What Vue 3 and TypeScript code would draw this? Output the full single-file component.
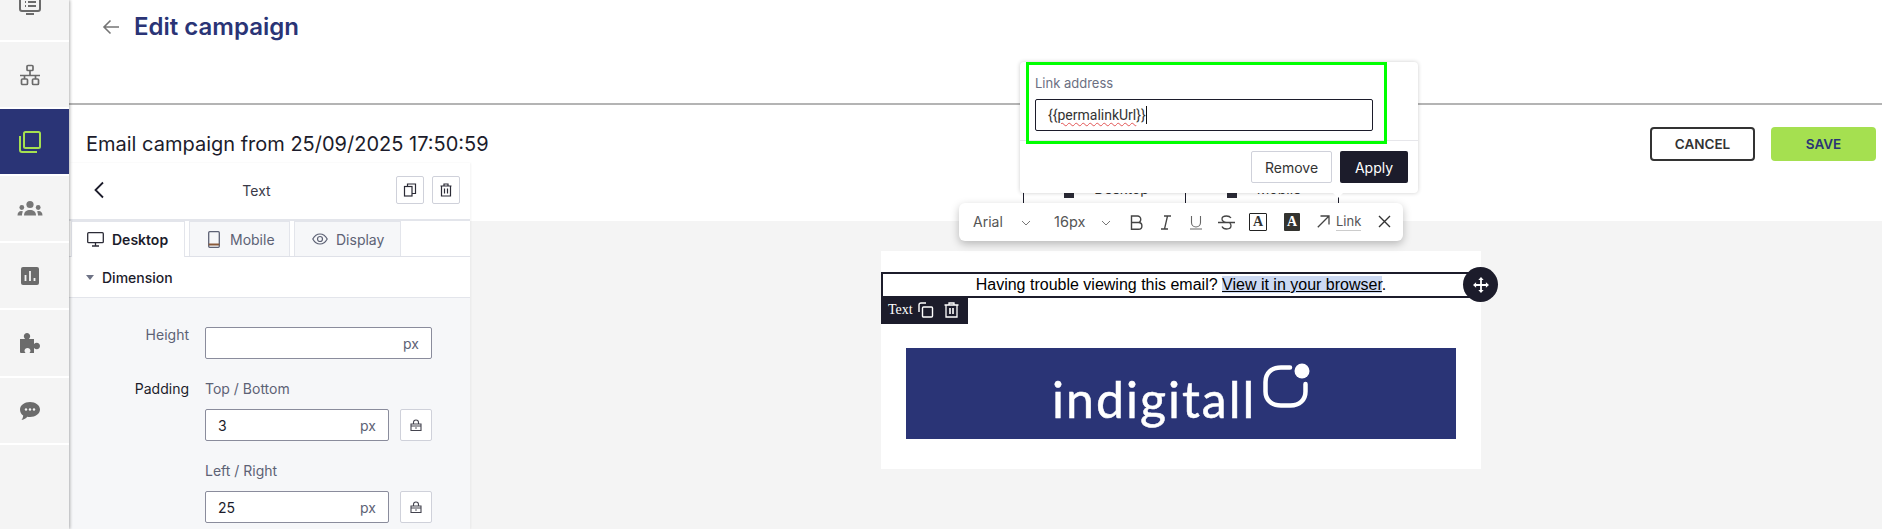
<script setup lang="ts">
const navItems = [
  { id: 'list', height: 40 },
  { id: 'flow', height: 65 },
  { id: 'templates', height: 65 },
  { id: 'users', height: 65 },
  { id: 'stats', height: 65 },
  { id: 'addons', height: 66 },
  { id: 'chat', height: 65 },
]
const braceOpen = '{' + '{'
const braceClose = '}' + '}'
</script>

<template>
  <div class="page">
    <aside class="sidebar">
      <div
        v-for="item in navItems"
        :key="item.id"
        class="nav-item"
        :class="{ active: item.id === 'templates', first: item.id === 'list' }"
        :style="{ height: item.height + 'px' }"
      >
        <svg v-if="item.id === 'list'" width="24" height="24" viewBox="0 0 24 24" fill="none" stroke="#6b6b6b" stroke-width="2">
          <rect x="2" y="1" width="20" height="18" rx="2" />
          <path d="M7 6h1M7 10h1M7 14h1M10 6h8M10 10h8M10 14h8M8 22h8" />
        </svg>
        <svg v-else-if="item.id === 'flow'" width="22" height="22" viewBox="0 0 22 22" fill="none" stroke="#6b6b6b" stroke-width="1.7">
          <rect x="8" y="1.5" width="6" height="5" rx="1" />
          <rect x="2.5" y="15" width="6" height="5.5" rx="1" />
          <rect x="13.5" y="15" width="6" height="5.5" rx="1" />
          <path d="M11 6.5v5M1 11.5h20M5.5 11.5V15M16.5 11.5V15" />
        </svg>
        <svg v-else-if="item.id === 'templates'" width="24" height="24" viewBox="0 0 24 24" fill="none" stroke="#a5e050" stroke-width="2">
          <rect x="6" y="2" width="16" height="16" rx="1.5" />
          <path d="M2 6v14a2 2 0 0 0 2 2h15" />
        </svg>
        <svg v-else-if="item.id === 'users'" width="26" height="18" viewBox="0 0 26 18" fill="#777">
          <circle cx="13" cy="4.5" r="3.6" />
          <path d="M7 15.5c0-4 2.6-5.6 6-5.6s6 1.6 6 5.6z" />
          <circle cx="4.8" cy="7.5" r="2.4" />
          <circle cx="21.2" cy="7.5" r="2.4" />
          <path d="M.5 15.5c0-3 1.5-4.5 3.8-4.5.8 0 1.3.2 1.7.5-.7 1-1 2.4-1 4zM25.5 15.5c0-3-1.5-4.5-3.8-4.5-.8 0-1.3.2-1.7.5.7 1 1 2.4 1 4z" />
        </svg>
        <svg v-else-if="item.id === 'stats'" width="18" height="18" viewBox="0 0 18 18">
          <rect width="18" height="18" rx="2" fill="#6b6b6b" />
          <path d="M4.5 8v6M9 4v10M13.5 11v3" stroke="#f4f4f4" stroke-width="1.8" />
        </svg>
        <svg v-else-if="item.id === 'addons'" width="22" height="22" viewBox="0 0 22 22" fill="#6b6b6b">
          <path d="M1 7h5c-.8-1-1.2-1.8-1.2-2.7C4.8 2.3 6.3 1 8 1s3.2 1.3 3.2 3.3c0 .9-.4 1.700-1.200 2.700h5v5c1-.8 1.800-1.200 2.700-1.200 2 0 3.300 1.500 3.300 3.200s-1.300 3.200-3.300 3.200c-.9 0-1.700-.4-2.700-1.200V21h-4.500c.7-.9 1-1.600 1-2.300 0-1.500-1.300-2.700-3-2.700s-3 1.200-3 2.700c0 .7.3 1.400 1 2.300H2a1 1 0 0 1-1-1z" />
        </svg>
        <svg v-else width="20" height="18" viewBox="0 0 20 18">
          <path d="M10 0c5.500 0 10 3.200 10 7.500S15.500 15 10 15c-1 0-1.900-.1-2.800-.3C6 16.300 4.200 17.600 1.500 18c1-1.100 1.600-2.500 1.700-4.400C1.200 12.200 0 10 0 7.500 0 3.200 4.500 0 10 0z" fill="#6b6b6b" />
          <circle cx="6" cy="7.5" r="1.2" fill="#f4f4f4" />
          <circle cx="10" cy="7.5" r="1.2" fill="#f4f4f4" />
          <circle cx="14" cy="7.5" r="1.2" fill="#f4f4f4" />
        </svg>
      </div>
    </aside>

    <main class="main">
      <header class="top-header">
        <svg class="back-arrow" width="18" height="16" viewBox="0 0 18 16" fill="none" stroke="#757575" stroke-width="1.6">
          <path d="M17 8H2M8.5 1.5 2 8l6.500 6.500" />
        </svg>
        <h1>Edit campaign</h1>
      </header>

      <div class="title-row">
        <h2>Email campaign from 25/09/2025 17:50:59</h2>
        <div class="title-actions">
          <button class="btn-cancel">CANCEL</button>
          <button class="btn-save">SAVE</button>
        </div>
      </div>

      <div class="workspace">
        <section class="panel">
          <div class="panel-head">
            <svg class="panel-back" width="12" height="18" viewBox="0 0 12 18" fill="none" stroke="#1c1c2b" stroke-width="1.8">
              <path d="M10 1.5 2.5 9l7.500 7.500" />
            </svg>
            <span class="panel-title">Text</span>
            <button class="icon-btn">
              <svg width="14" height="14" viewBox="0 0 14 14" fill="none" stroke="#2b2b36" stroke-width="1.2">
                <rect x="1.5" y="3.5" width="7.5" height="9.5" />
                <path d="M4.5 3.5V1h8v9.500H9" />
              </svg>
            </button>
            <button class="icon-btn">
              <svg width="14" height="14" viewBox="0 0 14 14" fill="none" stroke="#2b2b36" stroke-width="1.2">
                <path d="M1.5 3h11M5 3V1h4v2M2.500 3v10h9V3M5.500 5.500v5M8.500 5.500v5" />
              </svg>
            </button>
          </div>

          <div class="tabs">
            <div class="tab selected">
              <svg width="17" height="15" viewBox="0 0 17 15" fill="none" stroke="#2b2b36" stroke-width="1.3">
                <rect x=".7" y=".7" width="15.6" height="10" rx="1" />
                <path d="M8.5 10.7v3M5 14h7" />
              </svg>
              Desktop
            </div>
            <div class="tab mobile">
              <svg width="12" height="17" viewBox="0 0 12 17" fill="none" stroke="#5d6275" stroke-width="1.3">
                <rect x=".7" y=".7" width="10.6" height="15.6" rx="1" />
                <path d="M.7 13.5h10.6" stroke-width="2" stroke="#8a5a3a" />
              </svg>
              Mobile
            </div>
            <div class="tab display">
              <svg width="16" height="12" viewBox="0 0 16 12" fill="none" stroke="#5d6275" stroke-width="1.2">
                <path d="M.8 6C2.5 2.8 5 1 8 1s5.500 1.800 7.200 5c-1.700 3.200-4.200 5-7.200 5S2.500 9.200.8 6z" />
                <circle cx="8" cy="6" r="2.5" />
              </svg>
              Display
            </div>
          </div>

          <div class="section-head">
            <span class="caret"></span>
            Dimension
          </div>

          <div class="form">
            <div class="form-row height-row">
              <label class="row-label">Height</label>
              <div class="field wide"><span class="unit">px</span></div>
            </div>
            <div class="form-row">
              <label class="row-label dark">Padding</label>
              <div class="padding-col">
                <span class="sub-label">Top / Bottom</span>
                <div class="field-line">
                  <div class="field"><span class="value">3</span><span class="unit">px</span></div>
                  <button class="lock-btn">
                    <svg width="12" height="12" viewBox="0 0 12 12" fill="none" stroke="#44444f" stroke-width="1.1">
                      <path d="M3.5 5V3.5a2.500 2.500 0 0 1 5 0V5" />
                      <path d="M1 5h10v6.500H1zM1 7h10" />
                      <circle cx="6" cy="9" r=".8" fill="#44444f" stroke="none" />
                    </svg>
                  </button>
                </div>
                <span class="sub-label second">Left / Right</span>
                <div class="field-line">
                  <div class="field"><span class="value">25</span><span class="unit">px</span></div>
                  <button class="lock-btn">
                    <svg width="12" height="12" viewBox="0 0 12 12" fill="none" stroke="#44444f" stroke-width="1.1">
                      <path d="M3.5 5V3.5a2.500 2.500 0 0 1 5 0V5" />
                      <path d="M1 5h10v6.500H1zM1 7h10" />
                      <circle cx="6" cy="9" r=".8" fill="#44444f" stroke="none" />
                    </svg>
                  </button>
                </div>
              </div>
            </div>
          </div>
        </section>

        <section class="canvas">
          <div class="email">
            <div class="text-block">
              <p>Having trouble viewing this email? <a>View it in your browser</a>.</p>
              <div class="block-tag">
                <span>Text</span>
                <svg width="16" height="16" viewBox="0 0 16 16" fill="none" stroke="#fff" stroke-width="1.4">
                  <path d="M1 10V3a2 2 0 0 1 2-2h5" />
                  <rect x="4.5" y="5" width="10" height="10" rx="1" />
                </svg>
                <svg width="15" height="16" viewBox="0 0 15 16" fill="none" stroke="#fff" stroke-width="1.3">
                  <path d="M.5 3h14M5 3V1h5v2M2 3v12h11V3" />
                  <path d="M6 6v6M9 6v6" stroke-width="1.6" />
                </svg>
              </div>
              <div class="move-handle">
                <svg width="16" height="16" viewBox="0 0 18 18" fill="#fff">
                  <path d="M9 0l3 3.500h-2V8h4.500V6L18 9l-3.500 3v-2H10v4.500h2L9 18l-3-3.500h2V10H3.500v2L0 9l3.500-3v2H8V3.500H6z" />
                </svg>
              </div>
            </div>
            <div class="logo-wrap">
              <div class="logo">
                <span class="logo-text">indigitall</span>
                <svg class="logo-mark" width="48" height="50" viewBox="0 0 48 50" fill="none">
                  <path d="M28 6.5H19C9.500 6.500 3.500 12 3.500 21v9.500c0 8.500 6 14 15.500 14h9.500c9 0 15-5.500 15-14V23" stroke="#fff" stroke-width="4.500" stroke-linecap="round" />
                  <circle cx="40" cy="10" r="7.5" fill="#fff" />
                </svg>
              </div>
            </div>
          </div>
        </section>
      </div>
    </main>

    <!-- device switch sits behind the popover, only its lower edge shows -->
    <div class="device-switch">
      <div class="device"><span class="device-dot"></span>Desktop</div>
      <div class="device"><span class="device-dot"></span>Mobile</div>
    </div>

    <div class="link-popover">
      <div class="popover-body">
        <label>Link address</label>
        <div class="link-input">
          <span>{{ braceOpen }}<u>permalinkUrl</u>{{ braceClose }}</span><i class="caret-line"></i>
        </div>
      </div>
      <div class="popover-foot">
        <button class="btn-remove">Remove</button>
        <button class="btn-apply">Apply</button>
      </div>
      <span class="popover-arrow"></span>
    </div>
    <div class="highlight-box"></div>

    <div class="toolbar">
      <span class="tb-select font">Arial</span>
      <svg class="chev" width="10" height="6" viewBox="0 0 10 6" fill="none" stroke="#777" stroke-width="1"><path d="M1 1l4 4 4-4" /></svg>
      <span class="tb-select size">16px</span>
      <svg class="chev size-chev" width="10" height="6" viewBox="0 0 10 6" fill="none" stroke="#777" stroke-width="1"><path d="M1 1l4 4 4-4" /></svg>
      <svg class="tb-icon bold" width="13" height="15" viewBox="0 0 13 15" fill="none" stroke="#444" stroke-width="1.4">
        <path d="M1.5 1h6a3 3 0 0 1 0 6.500h-6zM1.500 7.500h7a3.300 3.300 0 0 1 0 6.800h-7z" />
      </svg>
      <svg class="tb-icon ital" width="10" height="15" viewBox="0 0 10 15" fill="none" stroke="#444" stroke-width="1.3">
        <path d="M3 1h7M0 14h7M6.500 1l-3 13" />
      </svg>
      <svg class="tb-icon under" width="12" height="15" viewBox="0 0 12 15" fill="none" stroke="#666" stroke-width="1.1">
        <path d="M1.5 1v6.500a4.500 4.500 0 0 0 9 0V1M0 14h12" />
      </svg>
      <svg class="tb-icon strike" width="17" height="15" viewBox="0 0 17 15" fill="none" stroke="#444" stroke-width="1.3">
        <path d="M13 3C12 1.500 10.500 1 8.500 1 6 1 4 2.200 4 4c0 2 2 3 4.500 3.500M0 7.500h17M4 11.500C4.800 13.300 6.500 14 8.500 14c2.700 0 4.500-1.300 4.500-3.200 0-1-.4-1.900-1.200-2.500" />
      </svg>
      <span class="tb-a outline">A</span>
      <span class="tb-a solid">A</span>
      <svg class="tb-icon link-arrow" width="13" height="13" viewBox="0 0 13 13" fill="none" stroke="#444" stroke-width="1.3">
        <path d="M.8 12.200 12 1M3.500 1H12v8.500" />
      </svg>
      <span class="tb-link">Link</span>
      <svg class="tb-icon close" width="13" height="13" viewBox="0 0 13 13" fill="none" stroke="#333" stroke-width="1.4">
        <path d="M1 1l11 11M12 1 1 12" />
      </svg>
    </div>
  </div>
</template>

<style>
html,
body {
  margin: 0;
  background: #fff;
}
</style>

<style scoped>
.page {
  position: relative;
  display: flex;
  width: 1882px;
  height: 529px;
  overflow: hidden;
  font-family: Inter, "Liberation Sans", sans-serif;
  color: #1c1c2b;
  background: #fff;
}
button {
  font-family: inherit;
  cursor: pointer;
}

/* sidebar */
.sidebar {
  flex: none;
  width: 69px;
  display: flex;
  flex-direction: column;
  gap: 2px;
  background: #fff;
  box-shadow: 1px 0 3px rgba(0, 0, 0, 0.3);
  position: relative;
  z-index: 1;
}
.sidebar::after {
  content: "";
  display: block;
  flex: 1;
  background: #f4f4f4;
}
.nav-item {
  flex: none;
  display: flex;
  align-items: center;
  justify-content: center;
  padding-right: 9px;
  box-sizing: border-box;
  background: #f4f4f4;
  overflow: hidden;
}
.nav-item.first {
  align-items: flex-end;
  padding-bottom: 24px;
}
.nav-item.active {
  background: #2a3476;
}

.main {
  flex: 1;
  min-width: 0;
  display: flex;
  flex-direction: column;
}

/* header */
.top-header {
  flex: none;
  height: 93px;
  display: flex;
  align-items: flex-start;
  padding: 10px 0 0 33px;
  border-bottom: 2px solid #b4b4b4;
}
.back-arrow {
  margin-top: 9px;
}
.top-header h1 {
  margin: 0 0 0 14px;
  font-size: 24px;
  line-height: 34px;
  font-weight: 600;
  color: #2a3476;
}

.title-row {
  flex: none;
  height: 58px;
  display: flex;
  justify-content: space-between;
  padding: 22px 6px 0 17px;
  box-sizing: border-box;
}
.title-row h2 {
  margin: 0;
  font-size: 20px;
  line-height: 34px;
  font-weight: 400;
  color: #1c1c2b;
}
.title-actions {
  display: flex;
  gap: 16px;
}
.btn-cancel,
.btn-save {
  width: 105px;
  height: 34px;
  border-radius: 4px;
  font-size: 13.5px;
  font-weight: 600;
}
.btn-cancel {
  background: #fff;
  border: 2px solid #333;
  color: #333;
}
.btn-save {
  background: #a5e050;
  border: none;
  color: #2a3476;
}

.workspace {
  flex: 1;
  min-height: 0;
  display: flex;
}

/* settings panel */
.panel {
  flex: none;
  width: 401px;
  background: #fff;
  display: flex;
  flex-direction: column;
  box-shadow: 1px 0 2px rgba(0, 0, 0, 0.05);
  position: relative;
}
.panel-head {
  flex: none;
  height: 58px;
  display: flex;
  align-items: center;
  gap: 8px;
  padding: 0 10px 2px 24px;
  border-bottom: 2px solid #e3e5eb;
  box-sizing: border-box;
}
.panel-title {
  flex: 1;
  text-align: center;
  font-size: 14px;
  color: #3a3a48;
  padding-left: 12px;
}
.icon-btn {
  width: 28px;
  height: 28px;
  padding: 0;
  display: flex;
  align-items: center;
  justify-content: center;
  background: #fff;
  border: 1px solid #cfd1da;
  border-radius: 2px;
}
.tabs {
  flex: none;
  height: 36px;
  display: flex;
  gap: 4px;
  padding-left: 2px;
  border-bottom: 1px solid #dfe1e8;
  box-sizing: border-box;
}
.tab {
  display: flex;
  align-items: center;
  gap: 8px;
  height: 35px;
  box-sizing: border-box;
  font-size: 14px;
  color: #5d6275;
  background: #f6f7f9;
  border: 1px solid #e3e5eb;
  border-bottom: none;
  padding-left: 15px;
}
.tab.selected {
  width: 114px;
  height: 36px;
  background: #fff;
  font-weight: 600;
  color: #1c1c2b;
  padding-left: 15px;
}
.tab.mobile {
  width: 101px;
  padding-left: 18px;
  gap: 10px;
}
.tab.display {
  width: 107px;
  padding-left: 17px;
}
.section-head {
  flex: none;
  height: 41px;
  display: flex;
  align-items: center;
  gap: 8px;
  padding-left: 17px;
  font-size: 14px;
  font-weight: 500;
  border-bottom: 1px solid #e3e5eb;
  box-sizing: border-box;
}
.caret {
  width: 0;
  height: 0;
  border-left: 4px solid transparent;
  border-right: 4px solid transparent;
  border-top: 5px solid #6e7285;
}
.form {
  flex: 1;
  background: #f6f7f9;
  padding-top: 29px;
}
.form-row {
  display: grid;
  grid-template-columns: 120px 227px;
  column-gap: 16px;
}
.height-row {
  margin-bottom: 22px;
}
.row-label {
  text-align: right;
  font-size: 14px;
  line-height: 16px;
  color: #5d6275;
}
.row-label.dark {
  color: #1c1c2b;
}
.field {
  flex: 1;
  height: 32px;
  display: flex;
  align-items: center;
  justify-content: space-between;
  background: #fff;
  border: 1px solid #8a8c9c;
  border-radius: 2px;
  box-sizing: border-box;
  padding: 0 12px;
  font-size: 14px;
}
.field.wide {
  justify-content: flex-end;
}
.unit {
  color: #5d6275;
}
.padding-col {
  display: flex;
  flex-direction: column;
}
.sub-label {
  font-size: 14px;
  line-height: 16px;
  color: #5d6275;
  margin-bottom: 12px;
}
.sub-label.second {
  margin-top: 22px;
}
.field-line {
  display: flex;
  gap: 11px;
}
.lock-btn {
  flex: none;
  width: 32px;
  height: 32px;
  padding: 0;
  display: flex;
  align-items: center;
  justify-content: center;
  background: #fff;
  border: 1px solid #cfd1da;
  border-radius: 2px;
}

/* canvas */
.canvas {
  flex: 1;
  min-width: 0;
  display: flex;
  flex-direction: column;
  margin-top: 58px;
  padding: 30px 0 0 411px;
  background: #f4f4f4;
}
.email {
  width: 600px;
  height: 218px;
  background: #fff;
  padding-top: 21px;
  box-sizing: border-box;
}
.text-block {
  position: relative;
  height: 22px;
  border: 2px solid #1c1c2b;
  border-right: none;
}
.text-block p {
  margin: 0;
  font-family: "Liberation Sans", Arial, sans-serif;
  font-size: 16px;
  line-height: 22px;
  color: #000;
  text-align: center;
  padding-right: 2px;
}
.text-block a {
  color: #000;
  text-decoration: underline;
  background: #ccd9f3;
}
.block-tag {
  position: absolute;
  left: -2px;
  top: 24px;
  width: 87px;
  height: 26px;
  display: flex;
  align-items: center;
  gap: 5px;
  padding: 0 0 2px 7px;
  box-sizing: border-box;
  background: #1c1c2b;
  color: #fff;
  font-family: "Liberation Serif", serif;
  font-size: 14px;
}
.block-tag svg + svg {
  margin-left: 5px;
}
.move-handle {
  position: absolute;
  right: -17px;
  top: -7px;
  width: 35px;
  height: 35px;
  border-radius: 50%;
  background: #1c1c2b;
  display: flex;
  align-items: center;
  justify-content: center;
}
.logo-wrap {
  padding: 50px 25px 0;
}
.logo {
  height: 91px;
  background: #2a3476;
  position: relative;
  color: #fff;
  padding-left: 146px;
}
.logo-text {
  display: block;
  padding-top: 23px;
  font-family: Lato, "Noto Sans", sans-serif;
  font-size: 50px;
  line-height: 56px;
  font-weight: 400;
  letter-spacing: 2px;
  -webkit-text-stroke: 0.5px #fff;
}
.logo-mark {
  position: absolute;
  left: 356px;
  top: 13px;
}

/* floating editor chrome */
.device-switch {
  position: absolute;
  left: 1023px;
  top: 165px;
  width: 316px;
  height: 40px;
  display: flex;
  background: #fff;
  border: 1px solid #1c1c2b;
  border-bottom: none;
  box-sizing: border-box;
}
.device {
  flex: none;
  width: 161px;
  display: flex;
  align-items: flex-start;
  justify-content: center;
  gap: 20px;
  padding: 14px 0 0 4px;
  box-sizing: border-box;
  font-size: 14px;
  color: #333;
}
.device + .device {
  flex: 1;
  border-left: 1px solid #1c1c2b;
}
.device-dot {
  width: 10px;
  height: 18px;
  background: #2b2b36;
}
.link-popover {
  position: absolute;
  left: 1020px;
  top: 62px;
  width: 398px;
  height: 131px;
  background: #fff;
  border-radius: 4px;
  box-shadow: 0 0 4px rgba(0, 0, 0, 0.2);
}
.popover-body {
  height: 79px;
  box-sizing: border-box;
  padding: 13px 45px 0 15px;
  border-bottom: 1px solid #e6e6ea;
}
.popover-body label {
  display: block;
  font-size: 13px;
  line-height: 16px;
  color: #6b6f82;
  margin-bottom: 8px;
}
.link-input {
  height: 32px;
  display: flex;
  align-items: center;
  padding-left: 12px;
  border: 1px solid #1c1c2b;
  border-radius: 2px;
  box-sizing: border-box;
  font-family: Roboto, sans-serif;
  font-size: 14px;
  color: #333;
}
.link-input u {
  text-decoration: underline wavy #e25555 1px;
  text-underline-offset: 2px;
}
.caret-line {
  width: 1px;
  height: 18px;
  background: #111;
}
.popover-foot {
  display: flex;
  justify-content: flex-end;
  gap: 8px;
  padding: 10px 10px 0 0;
}
.btn-remove,
.btn-apply {
  height: 32px;
  border-radius: 2px;
  font-size: 14px;
  padding: 0;
}
.btn-remove {
  width: 81px;
  background: #fff;
  border: 1px solid #cfd1da;
  color: #333;
}
.btn-apply {
  width: 68px;
  background: #1c1c2b;
  border: none;
  color: #fff;
}
.popover-arrow {
  position: absolute;
  left: 313px;
  bottom: -5px;
  width: 0;
  height: 0;
  border-left: 5px solid transparent;
  border-right: 5px solid transparent;
  border-top: 5px solid #fff;
}
.highlight-box {
  position: absolute;
  left: 1026px;
  top: 62px;
  width: 361px;
  height: 82px;
  border: 3px solid #00ff00;
  box-sizing: border-box;
  pointer-events: none;
}
.toolbar {
  position: absolute;
  left: 959px;
  top: 203px;
  width: 444px;
  height: 38px;
  background: #fff;
  border-radius: 6px;
  box-shadow: 0 3px 8px rgba(0, 0, 0, 0.25);
  font-size: 14px;
  color: #555;
}
.toolbar > * {
  position: absolute;
}
.tb-select {
  top: 10px;
  line-height: 18px;
}
.tb-select.font {
  left: 14px;
}
.tb-select.size {
  left: 95px;
  font-size: 14.5px;
}
.chev {
  left: 62px;
  top: 17px;
}
.size-chev {
  left: 142px;
}
.tb-icon {
  top: 12px;
}
.bold {
  left: 171px;
}
.ital {
  left: 202px;
}
.under {
  left: 231px;
}
.strike {
  left: 259px;
}
.tb-a {
  top: 10px;
  width: 18px;
  height: 18px;
  box-sizing: border-box;
  display: flex;
  align-items: center;
  justify-content: center;
  font-family: "Liberation Serif", serif;
  font-weight: 700;
  font-size: 14px;
  border-radius: 1px;
}
.tb-a.outline {
  left: 290px;
  border: 1px solid #222;
  color: #333;
}
.tb-a.solid {
  left: 325px;
  width: 16px;
  background: #33332f;
  color: #fff;
}
.link-arrow {
  left: 358px;
  top: 12px;
}
.tb-link {
  left: 377px;
  top: 10px;
  line-height: 17px;
  font-size: 13px;
  border-bottom: 1px solid #ccc;
}
.close {
  left: 419px;
  top: 12px;
}
</style>
